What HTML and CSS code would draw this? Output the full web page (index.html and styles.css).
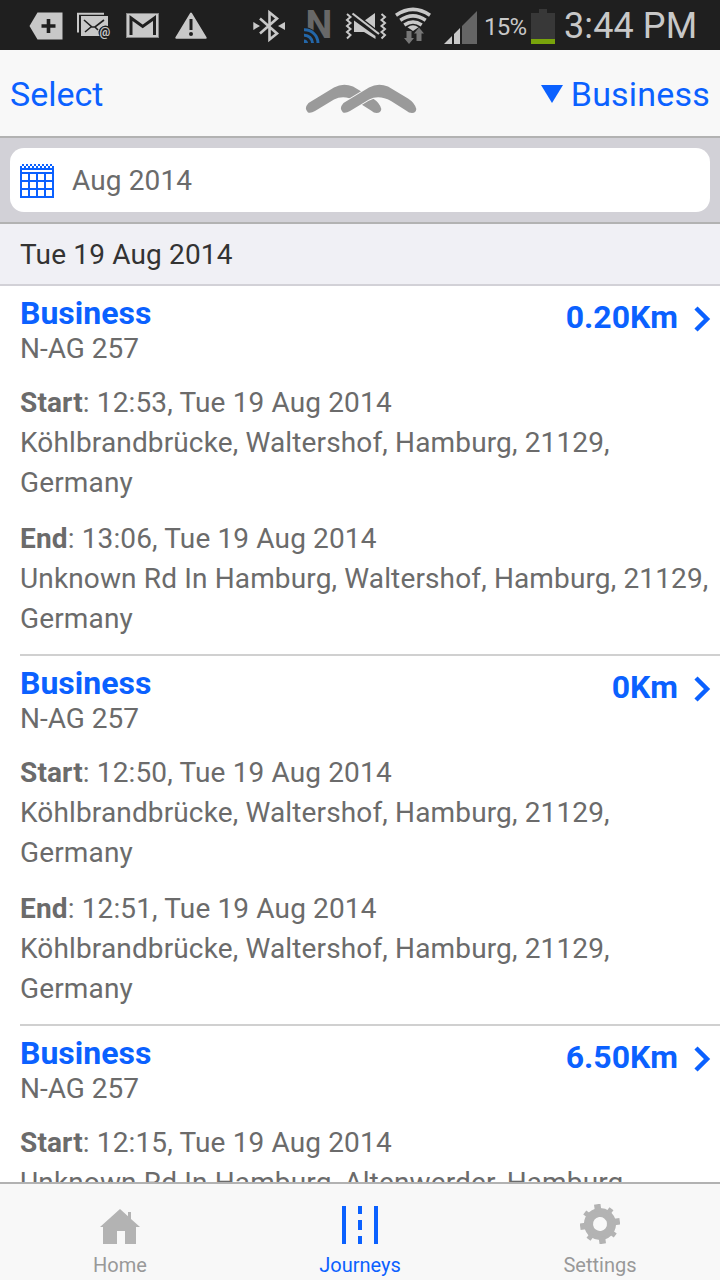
FILE: index.html
```
<!DOCTYPE html>
<html lang="en">

<head>
    <meta charset="UTF-8">
    <meta name="viewport" content="width=device-width, initial-scale=1.0">
    <title>Journeys</title>
    <link rel="stylesheet" href="styles.css">
</head>

<body>
    <div class="app">
        <div class="status-bar">
            <div class="status-left">
                <svg class="status-icon" width="34" height="50" viewBox="29 0 34 50">
                    <path d="M37.5 12.5H62.5V39.5H37.5L29.5 26Z" fill="#c8c8c8" />
                    <path d="M48.5 19v14M41.5 26h14" stroke="#1f1f1f" stroke-width="3.6" />
                </svg>
                <svg class="status-icon" width="35" height="50" viewBox="77 0 35 50">
                    <path d="M78 32.5V13.7H104" fill="none" stroke="#c8c8c8" stroke-width="2" />
                    <path d="M81 16H108V26a7 7 0 0 0-8.5 10H81Z" fill="#c8c8c8" />
                    <path d="M84 20l8 7h3l9-7M85 32l6-5M95 27l3 3" fill="none" stroke="#1f1f1f" stroke-width="1.6" />
                    <text class="at-sign" x="99.5" y="35.5">@</text>
                </svg>
                <svg class="status-icon gmail" width="34" height="50" viewBox="125 0 34 50">
                    <rect x="125.5" y="13.500" width="32" height="24" fill="#c8c8c8" stroke="#858585" />
                    <path d="M130 35V18L141.700 26.5 153.500 18V35" fill="none" stroke="#1f1f1f" stroke-width="3" />
                </svg>
                <svg class="status-icon" width="32" height="50" viewBox="174 0 32 50">
                    <path d="M190 13.5L204.7 37.8H175.3Z" fill="#c8c8c8" stroke="#c8c8c8" stroke-width="2" stroke-linejoin="round" />
                    <path d="M190 19v11" stroke="#1f1f1f" stroke-width="3" />
                    <circle cx="190" cy="34" r="2" fill="#1f1f1f" />
                </svg>
            </div>
            <div class="status-right">
                <svg class="status-icon bluetooth" width="32" height="50" viewBox="253 0 32 50">
                    <path d="M260 18.5L277 33.5 269.500 39.500V12.500L277 18.5 260 33.5" fill="none" stroke="#c8c8c8" stroke-width="2.6" />
                    <path d="M253.3 22V30L260 26ZM285 22V30L278 26Z" fill="#c8c8c8" />
                </svg>
                <svg class="status-icon nfc" width="29" height="50" viewBox="303 0 29 50">
                    <text class="nfc-text" x="305.500" y="38">N</text>
                    <path d="M303 27a16 16 0 0 1 17 16H303Z" fill="#1f1f1f" />
                    <path d="M304 29.8A13.5 13.5 0 0 1 318 43M304 35.2A8 8 0 0 1 312.5 43" fill="none" stroke="#2366a8" stroke-width="3" />
                    <path d="M304 39.5a4 4 0 0 1 4 3.5h-4Z" fill="#2366a8" />
                </svg>
                <svg class="status-icon mute" width="42" height="50" viewBox="345 0 42 50">
                    <path d="M347 14l3.500 3-3.500 3 3.500 3-3.500 3 3.500 3-3.500 3 3.500 3-3.500 3.500M381.500 14l3.500 3-3.500 3 3.500 3-3.500 3 3.500 3-3.500 3 3.500 3-3.500 3.500" fill="none" stroke="#c8c8c8" stroke-width="2" />
                    <path d="M354 20.500L375.500 36V39L364 32H354ZM365 20.300L375 13V28Z" fill="#c8c8c8" />
                    <path d="M352.500 13.500L379 34" stroke="#c8c8c8" stroke-width="2.200" />
                </svg>
                <svg class="status-icon wifi" width="36" height="50" viewBox="395 0 36 50">
                    <path d="M396 15.200Q413 3.500 430 15.200M400.300 20.200Q413 11.500 425.700 20.200M404.300 25Q413 19 421.700 25" fill="none" stroke="#c8c8c8" stroke-width="3.500" />
                    <path d="M407.500 27.200Q413 23.500 418.500 27.200L413 31Z" fill="#c8c8c8" />
                    <path d="M406.500 31H411.500V38H414L409 44 404 38H406.500ZM416.500 41H421.500V33.500H424L419 27.500 414 33.500H416.500Z" fill="#767676" />
                </svg>
                <svg class="status-icon signal" width="33" height="50" viewBox="444 0 33 50">
                    <path d="M444 44L452 36V44ZM454 34L460 28V44H454Z" fill="#c8c8c8" />
                    <path d="M462 26L477 11V44H462Z" fill="#656565" />
                </svg>
                <span class="battery-percent">15%</span>
                <svg class="status-icon battery" width="24" height="50" viewBox="531 0 24 50">
                    <path d="M531 13H539V9H547V13H555V39H531Z" fill="#383838" />
                    <path d="M531 39H555V44H531Z" fill="#78a30b" />
                </svg>
                <span class="time">3:44 PM</span>
            </div>
        </div>

        <div class="header">
            <a class="header-link select">Select</a>
            <svg class="logo" width="112" height="30" viewBox="305 84 112 30">
                <path d="M308.500 103L334 87.500Q343 82.500 353 86.500L373 98.500Q380 103 381.300 109Q381 113 376.500 113Q374 113 371 110.500L356 101Q344 94.500 334 99.500L315 111Q311 113.500 308 112.500Q303.500 108.500 308.500 103Z" fill="#9a9a9a" />
                <path d="M343.500 103L369 87.500Q378 82.500 388 86.500L408 98.500Q415 103 416.300 109Q416 113 412 113Q409 113 406 110.500L391 101Q379 94.500 369 99.500L350 111Q346 113.500 343 112.500Q338.500 108.500 343.500 103Z" fill="#9a9a9a" stroke="#f8f8f8" stroke-width="2" paint-order="stroke" />
            </svg>
            <a class="header-link filter"><span class="arrow-down"></span>Business</a>
        </div>

        <div class="search">
            <div class="month-field">
                <svg class="calendar" width="34" height="34" viewBox="0 0 34 34" shape-rendering="crispEdges">
                    <path d="M2 1H34" stroke="#0b61ff" stroke-width="2" stroke-dasharray="2 2" />
                    <path d="M0 3H34" stroke="#0b61ff" stroke-width="2" stroke-dasharray="2 2" />
                    <path d="M0 4H34V34H0ZM2 6V8H32V6ZM2 10V16H8V10ZM10 10V16H16V10ZM18 10V16H24V10ZM26 10V16H32V10ZM2 18V24H8V18ZM10 18V24H16V18ZM18 18V24H24V18ZM26 18V24H32V18ZM2 26V32H8V26ZM10 26V32H16V26ZM18 26V32H24V26ZM26 26V32H32V26Z" fill="#0b61ff" fill-rule="evenodd" />
                </svg>
                <span>Aug 2014</span>
            </div>
        </div>

        <div class="date-heading">Tue 19 Aug 2014</div>

        <div class="journeys">
            <div class="journey">
                <div class="journey-top">
                    <div>
                        <h2>Business</h2>
                        <p class="plate">N-AG 257</p>
                    </div>
                    <div class="distance">0.20Km
                        <svg class="chevron" width="17" height="26" viewBox="0 0 17 26"><path d="M2 2L13 13 2 24" /></svg>
                    </div>
                </div>
                <p class="stop"><b>Start</b>: 12:53, Tue 19 Aug 2014<br>Köhlbrandbrücke, Waltershof, Hamburg, 21129,<br>Germany</p>
                <p class="stop"><b>End</b>: 13:06, Tue 19 Aug 2014<br>Unknown Rd In Hamburg, Waltershof, Hamburg, 21129,<br>Germany</p>
            </div>
            <div class="journey">
                <div class="journey-top">
                    <div>
                        <h2>Business</h2>
                        <p class="plate">N-AG 257</p>
                    </div>
                    <div class="distance">0Km
                        <svg class="chevron" width="17" height="26" viewBox="0 0 17 26"><path d="M2 2L13 13 2 24" /></svg>
                    </div>
                </div>
                <p class="stop"><b>Start</b>: 12:50, Tue 19 Aug 2014<br>Köhlbrandbrücke, Waltershof, Hamburg, 21129,<br>Germany</p>
                <p class="stop"><b>End</b>: 12:51, Tue 19 Aug 2014<br>Köhlbrandbrücke, Waltershof, Hamburg, 21129,<br>Germany</p>
            </div>
            <div class="journey">
                <div class="journey-top">
                    <div>
                        <h2>Business</h2>
                        <p class="plate">N-AG 257</p>
                    </div>
                    <div class="distance">6.50Km
                        <svg class="chevron" width="17" height="26" viewBox="0 0 17 26"><path d="M2 2L13 13 2 24" /></svg>
                    </div>
                </div>
                <p class="stop"><b>Start</b>: 12:15, Tue 19 Aug 2014<br>Unknown Rd In Hamburg, Altenwerder, Hamburg,</p>
            </div>
        </div>

        <div class="tab-bar">
            <a class="tab">
                <svg width="40" height="40" viewBox="0 0 40 40" fill="#b3b3b3">
                    <path d="M20 5L28 12.200V8H31V15L40 23H36V40H25V27H17V40H3V23H0Z" />
                </svg>
                <span>Home</span>
            </a>
            <a class="tab active">
                <svg width="40" height="40" viewBox="0 0 40 40" fill="#0b61ff">
                    <path d="M2 2H6V40H2ZM18 2H22V10H18ZM18 16H22V26H18ZM18 32H22V40H18ZM34 2H38V40H34Z" />
                </svg>
                <span>Journeys</span>
            </a>
            <a class="tab">
                <svg width="40" height="40" viewBox="0 0 40 40">
                    <g transform="rotate(-8 20 20)" stroke="#b3b3b3" fill="none">
                        <circle cx="20" cy="20" r="11.500" stroke-width="9" />
                        <path d="M20 0V7M20 33V40M0 20H7M33 20H40" stroke-width="6.500" />
                        <path d="M6.500 6.500L11 11M29 29L33.500 33.500M6.500 33.500L11 29M29 11L33.500 6.500" stroke-width="5" />
                    </g>
                </svg>
                <span>Settings</span>
            </a>
        </div>
    </div>
</body>

</html>
```
FILE: styles.css
```
* {
    box-sizing: border-box;
}

body {
    font-family: Roboto, sans-serif;
    font-size: 28px;
    margin: 0;
    color: #6b6b6b;
    background-color: #fff;
}

h2,
p {
    margin: 0;
}

.app {
    display: flex;
    flex-direction: column;
    width: 720px;
    height: 1280px;
    overflow: hidden;
}

.status-bar {
    display: flex;
    justify-content: space-between;
    flex: none;
    height: 50px;
    padding: 0 22px 0 29px;
    background-color: #1f1f1f;
    color: #c8c8c8;
    line-height: 50px;
}

.status-left,
.status-right {
    display: flex;
}

.status-left {
    gap: 14px;
}

.status-icon {
    display: block;
    flex: none;
    overflow: visible;
}

.gmail {
    margin-right: 1px;
}

.at-sign {
    font-size: 12px;
    font-weight: bold;
    fill: #c8c8c8;
}

.nfc-text {
    font-size: 38px;
    font-weight: bold;
    fill: #686868;
}

.nfc {
    margin-left: 18px;
}

.mute {
    margin-left: 13px;
}

.wifi {
    margin-left: 8px;
}

.signal {
    margin-left: 13px;
}

.battery-percent {
    width: 43px;
    margin-left: 7px;
    font-size: 24px;
    line-height: 54px;
    letter-spacing: -0.8px;
    white-space: nowrap;
}

.battery {
    margin-left: 4px;
}

.time {
    width: 134px;
    margin-left: 9px;
    font-size: 36px;
    line-height: 52px;
    letter-spacing: 0.1px;
    white-space: nowrap;
}

.header {
    display: flex;
    justify-content: space-between;
    align-items: center;
    flex: none;
    height: 88px;
    padding: 0 10px;
    border-bottom: 2px solid #b2b2b2;
    background-color: #f8f8f8;
}

.header-link {
    display: flex;
    align-items: center;
    flex: 1;
    color: #0b61ff;
    font-size: 34px;
    line-height: 40px;
    padding-top: 2px;
}

.logo {
    margin: 12px 0 0 2px;
}

.filter {
    justify-content: flex-end;
    letter-spacing: 0.2px;
}

.arrow-down {
    margin-right: 8px;
    border: 11px solid transparent;
    border-top: 18px solid #0b61ff;
    border-bottom: 0;
}

.search {
    flex: none;
    padding: 10px;
    height: 86px;
    border-bottom: 2px solid #b2b2b2;
    background-color: #d2d1d7;
}

.month-field {
    display: flex;
    align-items: center;
    gap: 18px;
    height: 64px;
    padding: 0 10px;
    border-radius: 14px;
    background-color: #fff;
    letter-spacing: 0.13px;
}

.calendar {
    margin-top: 2px;
}

.date-heading {
    flex: none;
    height: 62px;
    padding-left: 20px;
    border-bottom: 2px solid #d2d1d7;
    background-color: #f0f0f5;
    color: #333;
    line-height: 61px;
    letter-spacing: 0.16px;
}

.journeys {
    flex: 1;
    min-height: 0;
    overflow: hidden;
    padding-left: 20px;
}

.journey {
    height: 370px;
    padding-top: 10px;
    border-bottom: 2px solid #d0d0d0;
}

.journey-top {
    display: flex;
    justify-content: space-between;
    padding-right: 9px;
}

.journey h2 {
    color: #0b61ff;
    font-size: 32px;
    line-height: 34px;
}

.plate {
    padding-top: 1px;
    line-height: 36px;
}

.distance {
    display: flex;
    align-items: center;
    height: 42px;
    color: #0b61ff;
    font-size: 32px;
    font-weight: bold;
}

.chevron {
    margin: 4px 0 0 16px;
}

.chevron path {
    fill: none;
    stroke: #0b61ff;
    stroke-width: 4.5;
}

.stop {
    margin-top: 16px;
    line-height: 40px;
    letter-spacing: 0.14px;
    white-space: nowrap;
}

.tab-bar {
    display: flex;
    flex: none;
    height: 98px;
    border-top: 2px solid #b2b2b2;
    background-color: #f8f8f8;
}

.tab {
    display: flex;
    flex: 1;
    flex-direction: column;
    align-items: center;
    padding-top: 20px;
    color: #999;
    font-size: 20px;
    line-height: 24px;
}

.tab span {
    margin-top: 9px;
}

.active {
    color: #0b61ff;
}
```
